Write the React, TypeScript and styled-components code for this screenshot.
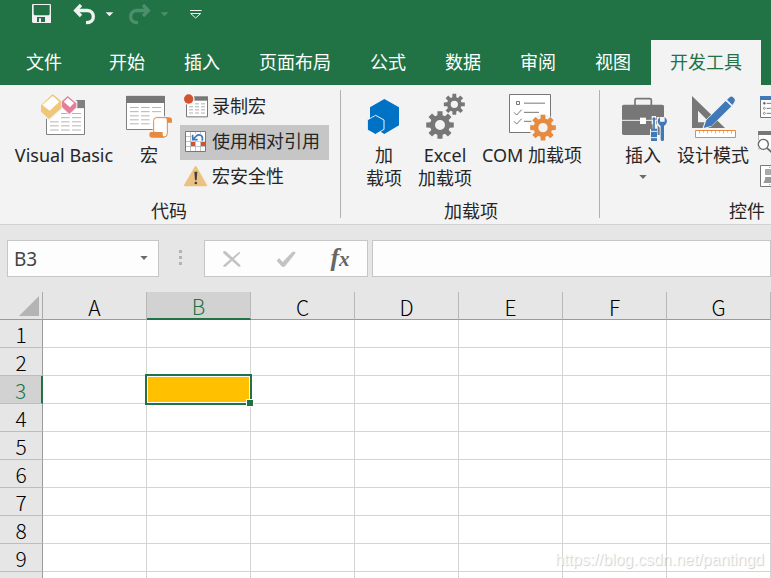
import React from "react";
import styled, { createGlobalStyle } from "styled-components";

const green = "#217346";
const ui = `"Noto Sans", "Noto Sans CJK SC", sans-serif`;

const GlobalStyle = createGlobalStyle`
  * { box-sizing: border-box; }
  body { margin: 0; overflow: hidden; background: #e6e6e6; }
  button { font: inherit; color: inherit; background: none; border: 0; padding: 0; margin: 0; }
  svg { display: block; flex: none; }
`;

const Window = styled.div`
  position: relative;
  display: flex;
  flex-direction: column;
  height: 100vh;
  overflow: hidden;
  font-family: ${ui};
  font-size: 18px;
  color: #262626;
`;

/* ---------- title and tabs ---------- */

const QuickAccess = styled.div`
  display: flex;
  align-items: flex-start;
  height: 40px;
  padding: 2px 0 0 31px;
  background: ${green};
`;

const QuickButton = styled.button<{ $gap?: number }>`
  margin-left: ${(p) => p.$gap ?? 0}px;
`;

const Tabs = styled.nav`
  display: flex;
  gap: 1px;
  height: 45px;
  padding-left: 7px;
  background: ${green};
`;

const Tab = styled.button<{ $active?: boolean; $wide?: boolean }>`
  padding: 0 ${(p) => (p.$wide ? 27 : 19)}px 2px 19px;
  line-height: 42px;
  white-space: nowrap;
  color: ${(p) => (p.$active ? green : "#fff")};
  background: ${(p) => (p.$active ? "#f3f3f3" : "transparent")};
`;

/* ---------- ribbon ---------- */

const Ribbon = styled.div`
  display: flex;
  height: 140px;
  overflow: hidden;
  background: #f3f3f3;
  border-bottom: 1px solid #d2d2d2;
`;

const Group = styled.section<{ $left: number; $right: number; $min?: number }>`
  display: flex;
  flex: none;
  flex-direction: column;
  justify-content: space-between;
  min-width: ${(p) => p.$min ?? 0}px;
  padding: 5px ${(p) => p.$right}px 1px ${(p) => p.$left}px;
`;

const GroupBody = styled.div`
  display: flex;
  align-items: flex-start;
`;

const GroupName = styled.div`
  line-height: 24px;
  text-align: center;
`;

const Divider = styled.div`
  flex: none;
  width: 1px;
  margin: 5px 0 6px;
  background: #b1b1b1;
`;

const BigButton = styled.button<{ $width: number }>`
  display: flex;
  flex-direction: column;
  align-items: center;
  gap: 3px;
  width: ${(p) => p.$width}px;
  padding-top: 3px;
  line-height: 23px;
  white-space: nowrap;
`;

const SmallColumn = styled.div<{ $gap: number }>`
  display: flex;
  flex-direction: column;
  margin-left: ${(p) => p.$gap}px;
`;

const SmallButton = styled.button<{ $on?: boolean }>`
  display: flex;
  align-items: center;
  gap: 4px;
  height: 35px;
  padding: 0 9px 0 4px;
  white-space: nowrap;
  background: ${(p) => (p.$on ? "#c6c6c6" : "transparent")};
`;

const SmallLabel = styled.span`
  padding-bottom: 4px;
  line-height: 24px;
`;

const IconOnly = styled.button`
  height: 35px;
`;

/* ---------- formula bar ---------- */

const FormulaRow = styled.div`
  display: flex;
  align-items: center;
  height: 67px;
  padding-left: 7px;
`;

const Field = styled.div<{ $width?: number }>`
  display: flex;
  align-items: center;
  flex: ${(p) => (p.$width ? "none" : "1")};
  width: ${(p) => (p.$width ? `${p.$width}px` : "auto")};
  height: 37px;
  background: #fdfdfd;
  border: 1px solid #c6c6c6;
`;

const NameInput = styled.input`
  flex: 1;
  min-width: 0;
  padding: 0 0 0 6px;
  border: 0;
  outline: 0;
  background: none;
  font: 19px ${ui};
  color: #444;
`;

const FormulaInput = styled(NameInput)`
  height: 100%;
`;

const DropButton = styled.button`
  padding: 0 10px;
`;

const Grip = styled.div`
  display: flex;
  flex-direction: column;
  gap: 3px;
  width: 45px;
  padding: 0 0 2px 20px;
`;

const GripDot = styled.span`
  width: 3px;
  height: 3px;
  background: #b3b3b3;
`;

const FormulaTools = styled(Field)`
  justify-content: space-between;
  margin-right: 4px;
  padding: 0 17px;
`;

/* ---------- sheet ---------- */

const Sheet = styled.div`
  flex: 1;
  min-height: 0;
  overflow: hidden;
`;

const Grid = styled.table`
  width: 100%;
  table-layout: fixed;
  border-spacing: 0;
  border-collapse: separate;
  font-family: "Noto Sans CJK SC", sans-serif;
  font-size: 21px;
  line-height: 26px;
  color: #000;
`;

const Corner = styled.th`
  width: 43px;
  height: 28px;
  padding: 0 3px 3px 0;
  border-right: 1px solid #ababab;
  border-bottom: 1px solid #9b9b9b;
  vertical-align: bottom;

  svg { margin-left: auto; }
`;

const ColumnHead = styled.th<{ $on: boolean }>`
  width: 104px;
  height: 28px;
  padding: ${(p) => (p.$on ? 2 : 3)}px 0 0;
  line-height: 24px;
  font-weight: 300;
  color: ${(p) => (p.$on ? green : "#000")};
  background: ${(p) => (p.$on ? "#d2d2d2" : "#e6e6e6")};
  border-right: 1px solid #b8b8b8;
  border-bottom: ${(p) => (p.$on ? `2px solid ${green}` : "1px solid #9b9b9b")};
`;

const HeadRest = styled.td`
  padding: 0;
  border-bottom: 1px solid #9b9b9b;
`;

const RowHead = styled.th<{ $on: boolean }>`
  height: 28px;
  padding: 1px 0 0;
  font-weight: 300;
  color: ${(p) => (p.$on ? green : "#000")};
  background: ${(p) => (p.$on ? "#d2d2d2" : "#e6e6e6")};
  border-right: ${(p) => (p.$on ? `2px solid ${green}` : "1px solid #9b9b9b")};
  border-bottom: 1px solid #bdbdbd;
`;

const Cell = styled.td`
  position: relative;
  height: 28px;
  padding: 0;
  background: #fff;
  border-right: 1px solid #d4d4d4;
  border-bottom: 1px solid #d4d4d4;
`;

const Selection = styled.div`
  position: absolute;
  z-index: 1;
  inset: -2px;
  border: 2px solid ${green};
  background: #ffc000;
  box-shadow: inset 0 0 0 1px #fff;
`;

const FillHandle = styled.span`
  position: absolute;
  right: -4px;
  bottom: -4px;
  width: 8px;
  height: 8px;
  background: ${green};
  border: 1px solid #fff;
`;

const Watermark = styled.div`
  position: absolute;
  right: 7px;
  bottom: 8px;
  z-index: 2;
  font: 16px/20px "Liberation Sans", sans-serif;
  color: rgba(255, 255, 255, 0.8);
  text-shadow: 1px 1px 1px rgba(0, 0, 0, 0.2);
  pointer-events: none;
`;

/* ---------- icons: three drawing units per pixel ---------- */

type IconProps = { x: number; y: number; w?: number; h?: number; children: React.ReactNode };

const Icon = ({ x, y, w = 48, h = 48, children }: IconProps) => (
  <svg width={w} height={h} viewBox={`${x} ${y} ${w * 3} ${h * 3}`} overflow="visible" aria-hidden="true">
    {children}
  </svg>
);

const gearPath = (cx: number, cy: number, outer: number, inner: number, hole: number) => {
  const point = (r: number, a: number) =>
    `${(cx + r * Math.cos(a)).toFixed(1)} ${(cy + r * Math.sin(a)).toFixed(1)}`;
  const step = Math.PI / 4;
  const points: string[] = [];
  for (let i = 0; i < 8; i++) {
    const a = i * step;
    points.push(point(inner, a - 0.27), point(outer, a - 0.18), point(outer, a + 0.18), point(inner, a + 0.27));
  }
  return `M${points.join("L")}ZM${cx - hole} ${cy}a${hole} ${hole} 0 1 0 ${hole * 2} 0a${hole} ${hole} 0 1 0 ${-hole * 2} 0Z`;
};

const SaveIcon = () => (
  <Icon x={93} y={6} w={21} h={24}>
    <path fillRule="evenodd" fill="#f1f1f1" d="M98 12H151L153 14V69H99L96 66V14ZM101 15V43L104 46H146L149 43V15ZM111 51V66H117V55H123V66H135V51Z" />
  </Icon>
);

const UndoShape = () => (
  <>
    <path d="M243 15L227 31.500L243 48" fill="none" stroke="currentColor" strokeWidth="10" />
    <path d="M228 31.500H262C275 31.500 280 41 280 50C280 60 273 68 258 68" fill="none" stroke="currentColor" strokeWidth="10" />
  </>
);

const UndoIcon = () => (
  <Icon x={219} y={6} w={23} h={24}>
    <g color="#f1f1f1"><UndoShape /></g>
  </Icon>
);

const RedoIcon = () => (
  <Icon x={384} y={6} w={23} h={24}>
    <g color="#4d8f6c" transform="translate(672 0) scale(-1 1)"><UndoShape /></g>
  </Icon>
);

const CaretIcon = ({ color }: { color: string }) => (
  <Icon x={0} y={0} w={9} h={24}>
    <path d="M2 31H25L13.500 43Z" fill={color} />
  </Icon>
);

const CustomizeIcon = () => (
  <Icon x={567} y={6} w={13} h={24}>
    <path d="M570 31.500H605M572 40.500L587 54L602 40.500Z" fill="none" stroke="#f1f1f1" strokeWidth="3" />
  </Icon>
);

const DownTriangle = ({ gap = 0 }: { gap?: number }) => (
  <Icon x={0} y={-gap * 3} w={8} h={5 + gap}>
    <path d="M1 0H23L12 12Z" fill="#6a6a6a" />
  </Icon>
);

const VisualBasicIcon = () => (
  <Icon x={120} y={24}>
    <path d="M139.500 68H253.500V148.500H139.500Z" fill="#fff" stroke="#808080" strokeWidth="3" />
    <path d="M190 45H255V69H190Z" fill="#808080" />
    <path d="M183 85.500H209M216 85.500H243M183 98H209M216 98H243M150 110.500H176M183 110.500H209M216 110.500H243M150 122.500H176M183 122.500H209M216 122.500H243M150 135H176M183 135H209M216 135H243" stroke="#b5b5b5" strokeWidth="3" />
    <path d="M160 23L188 49V73L148 108L118 84V60Z" fill="#f3f3f3" />
    <path d="M204 30L232 49V68L208 91L184 68V45Z" fill="#f3f3f3" />
    <path d="M158 27L184 49V70L147 102L123 80V61Z" fill="#efc77b" />
    <path d="M158 33L178 50L149 77L127 60Z" fill="#fff" />
    <path d="M203 33L229 55V67L208 87L186 66V49Z" fill="#e37f99" />
    <path d="M203 38L222 54L210 67L191 50Z" fill="#fff" />
  </Icon>
);

const MacroIcon = () => (
  <Icon x={375} y={24}>
    <path d="M379.500 34H493.500V133.500H379.500Z" fill="#fff" stroke="#808080" strokeWidth="3" />
    <path d="M378 33H495V54H378Z" fill="#777" />
    <path d="M390 67.500H416M423 67.500H449M456 67.500H483M390 80H416M423 80H449M456 80H483M390 92.500H416M423 92.500H449M390 104.500H416M423 104.500H449M390 116.500H416M423 116.500H449" stroke="#b5b5b5" strokeWidth="3" />
    <path d="M467 94H512L520 104V116H509V150L502 161H445V137H458V104Z" fill="#f3f3f3" />
    <path d="M461 142V106Q461 98 469 98H502V146Q502 156 492 156H472V142Z" fill="#fff" stroke="#e68a3f" strokeWidth="3" />
    <path d="M492 97H507Q516 97 516 106V113H501V106Q501 99 492 97Z" fill="#e68a3f" />
    <path d="M451 141H488V149Q488 154 494 158H456Q448 158 448 149Q448 144 451 141Z" fill="#e68a3f" />
  </Icon>
);

const RecordIcon = () => (
  <Icon x={42} y={32} w={24} h={24}>
    <path d="M49.500 36H112.500V94.500H49.500Z" fill="#fff" stroke="#777" strokeWidth="3" />
    <path d="M72 33H114V46H72Z" fill="#777" />
    <path d="M75 55.500H87M93 55.500H105M57 64.500H69M75 64.500H87M93 64.500H105M57 73.500H69M75 73.500H87M93 73.500H105M57 83H69M75 83H87M93 83H105" stroke="#b0b0b0" strokeWidth="3" />
    <circle cx="56" cy="41" r="18" fill="#f3f3f3" />
    <circle cx="56" cy="41" r="14" fill="#d35230" />
  </Icon>
);

const RelativeIcon = () => (
  <Icon x={42} y={135} w={24} h={24}>
    <path d="M46.500 136.500H106.500V196.500H46.500Z" fill="#fff" stroke="#777" strokeWidth="3" />
    <path d="M61.500 138V195M76.500 138V195M91.500 138V195M48 151.500H105M48 166.500H105M48 181.500H105" stroke="#a6a6a6" strokeWidth="2" />
    <path d="M64 143H98L105 150V166H64Z" fill="#fff" />
    <path d="M63 168H75V180H63ZM93 168H106V180H93Z" fill="#d35230" />
    <path d="M68 146V161H83M69 160L79 150Q86 144 94 149Q100 155 96 164" fill="none" stroke="#3f79b8" strokeWidth="5" />
  </Icon>
);

const SecurityIcon = () => (
  <Icon x={42} y={240} w={24} h={24}>
    <path d="M77 243L108 298H45Z" fill="#ecc282" stroke="#ecc282" strokeWidth="6" strokeLinejoin="round" />
    <path d="M73 257H82L80 283H75Z" fill="#404040" />
    <circle cx="77.500" cy="291" r="4" fill="#404040" />
  </Icon>
);

const AddInIcon = () => (
  <Icon x={60} y={24}>
    <path d="M133 42L177 67V121L133 147L90 121V67Z" fill="#0072c6" />
    <path d="M107 91L132 105V133L107 148L82 133V105Z" fill="#0072c6" stroke="#f3f3f3" strokeWidth="3" />
    <path d="M84 106L107 93V147L84 134Z" fill="#0072c6" />
  </Icon>
);

const ExcelAddInIcon = () => (
  <Icon x={243} y={24}>
    <path fillRule="evenodd" fill="#777" d={gearPath(343, 58, 32, 22, 11)} />
    <path fillRule="evenodd" fill="#777" d={gearPath(300, 120, 42, 30, 15)} />
  </Icon>
);

const ComAddInIcon = () => (
  <Icon x={504} y={24}>
    <path d="M508.500 28.500H631.500V142.500H508.500Z" fill="#fff" stroke="#777" strokeWidth="3" />
    <path d="M529.500 49.500H538.500V58.500H529.500ZM552 54.500H615M552 82H597M552 109H580M522 82L530 90L545 74M522 109L530 117L545 101" fill="none" stroke="#777" strokeWidth="3" />
    <circle cx="609" cy="128" r="40" fill="#f3f3f3" />
    <path fillRule="evenodd" fill="#e68a3f" d={gearPath(609, 128, 39, 28, 14)} />
  </Icon>
);

const ToolboxIcon = () => (
  <Icon x={87} y={24}>
    <path d="M135 60V45Q135 41 139 41H179Q184 41 184 45V60" fill="none" stroke="#777" strokeWidth="5" />
    <rect x="96" y="59" width="126" height="91" rx="5" fill="#777" />
    <path d="M96 106H222" stroke="#f3f3f3" strokeWidth="3" />
    <path d="M150 98H168V117H150Z" fill="#fff" />
    <path d="M185 93H198V118H203V170H180V132H188V118H185Z" fill="#f3f3f3" />
    <path d="M200 96H234V118L225 128V170H209V128L200 118Z" fill="#f3f3f3" />
    <path d="M192 96L198 102L194.500 106V131H201V168H183V131H189.500V106L186 102Z" fill="#3f79b8" />
    <path d="M183 139H201M183 158H201" stroke="#f3f3f3" strokeWidth="3" />
    <path d="M210 96V110H224V96Q231 101 231 109Q230 119 222 123V164Q222 168 217 168Q212 168 212 164V123Q204 119 203 109Q203 101 210 96Z" fill="#3f79b8" />
  </Icon>
);

const DesignIcon = () => (
  <Icon x={297} y={24}>
    <path fillRule="evenodd" d="M306 33L405 129H306ZM324 77V112H358Z" fill="#777" />
    <path d="M335 137L345 107L418 34L438 51L365 124Z" fill="#f3f3f3" />
    <path d="M341 129L349 106L407 48L424 64L365 122ZM411 44L420 36Q425 33 429 37L434 42Q436 47 433 51L427 60Z" fill="#3f79b8" />
    <path d="M316.500 136.500H436.500V157.500H316.500Z" fill="#fff" stroke="#e68a3f" strokeWidth="3" />
    <path d="M328.500 138V146M340.500 138V143M352.500 138V146M364.500 138V143M376.500 138V146M388.500 138V143M400.500 138V146M412.500 138V143M424.500 138V146" stroke="#e68a3f" strokeWidth="2" />
  </Icon>
);

const PropertiesIcon = () => (
  <Icon x={504} y={30} w={24} h={24}>
    <path d="M511.500 32H575V94.500H511.500Z" fill="#fff" stroke="#777" strokeWidth="3" />
    <path d="M510 30H576V42H510Z" fill="#3f79b8" />
    <path d="M530 52H543M530 67H543M530 82H543M550 52H566M550 67H566M550 82H566" stroke="#777" strokeWidth="3" />
    <g fill="#fff" stroke="#666" strokeWidth="2">
      <circle cx="523" cy="52" r="3" fill="#666" />
      <circle cx="523" cy="67" r="3" />
      <circle cx="523" cy="82" r="3" />
    </g>
  </Icon>
);

const ViewCodeIcon = () => (
  <Icon x={504} y={138} w={24} h={24}>
    <path d="M505.500 140H570V192H505.500Z" fill="#fff" stroke="#999" strokeWidth="2" />
    <path d="M504 138H572V150H504Z" fill="#777" />
    <path d="M533 192L548 205" stroke="#f3f3f3" strokeWidth="12" />
    <circle cx="520" cy="178" r="19" fill="#f3f3f3" />
    <circle cx="520" cy="178" r="15" fill="#fff" stroke="#666" strokeWidth="4" />
    <path d="M531 189L547 204" stroke="#666" strokeWidth="5" />
  </Icon>
);

const DialogIcon = () => (
  <Icon x={504} y={243} w={24} h={24}>
    <path d="M511.500 241.500H575V304.500H511.500Z" fill="#fff" stroke="#777" strokeWidth="3" />
    <path d="M525 252H568V270H525ZM525 276H568V292H525Z" fill="#aaa" />
    <path d="M520 294L529 276H568V294Z" fill="#999" />
    <path d="M537 247H541M537 299H541" stroke="#777" strokeWidth="2" />
  </Icon>
);

const CancelIcon = () => (
  <Icon x={666} y={70} w={20} h={20}>
    <path d="M669 78Q674 73 680 79L721 118V123H716L670 83ZM718 78L721 82L677 123H670V119Z" fill="#c3c3c3" />
  </Icon>
);

const EnterIcon = () => (
  <Icon x={829} y={70} w={21} h={20}>
    <path d="M831 105L838 97L849 109L879 78H887V83L856 122Q850 127 845 121Z" fill="#c3c3c3" />
  </Icon>
);

const Fx = styled.span`
  display: block;
  width: 20px;
  font: italic bold 26px/32px "Liberation Serif", serif;
  color: #666;
  white-space: nowrap;

  small { font-size: 21px; }
`;

const tabs = ["开始", "插入", "页面布局", "公式", "数据", "审阅", "视图"];
const columns = ["A", "B", "C", "D", "E", "F", "G"];
const rows = [1, 2, 3, 4, 5, 6, 7, 8, 9, 10];
const selected = { column: "B", row: 3 };

export default function App() {
  return (
    <Window>
      <GlobalStyle />
      <QuickAccess>
        <QuickButton aria-label="保存"><SaveIcon /></QuickButton>
        <QuickButton $gap={21} aria-label="撤消"><UndoIcon /></QuickButton>
        <QuickButton $gap={9} aria-label="撤消列表"><CaretIcon color="#f1f1f1" /></QuickButton>
        <QuickButton $gap={14} aria-label="恢复"><RedoIcon /></QuickButton>
        <QuickButton $gap={9} aria-label="恢复列表"><CaretIcon color="#4d8f6c" /></QuickButton>
        <QuickButton $gap={20} aria-label="自定义快速访问工具栏"><CustomizeIcon /></QuickButton>
      </QuickAccess>
      <Tabs>
        <Tab $wide>文件</Tab>
        {tabs.map((name) => <Tab key={name}>{name}</Tab>)}
        <Tab $active>开发工具</Tab>
      </Tabs>

      <Ribbon>
        <Group $left={9} $right={11}>
          <GroupBody>
            <BigButton $width={110}><VisualBasicIcon />Visual Basic</BigButton>
            <BigButton $width={60}><MacroIcon />宏</BigButton>
            <SmallColumn $gap={1}>
              <SmallButton><RecordIcon /><SmallLabel>录制宏</SmallLabel></SmallButton>
              <SmallButton $on aria-pressed="true"><RelativeIcon /><SmallLabel>使用相对引用</SmallLabel></SmallButton>
              <SmallButton><SecurityIcon /><SmallLabel>宏安全性</SmallLabel></SmallButton>
            </SmallColumn>
          </GroupBody>
          <GroupName>代码</GroupName>
        </Group>
        <Divider />
        <Group $left={15} $right={13}>
          <GroupBody>
            <BigButton $width={56}><AddInIcon /><span>加<br />载项</span></BigButton>
            <BigButton $width={66}><ExcelAddInIcon /><span>Excel<br />加载项</span></BigButton>
            <BigButton $width={108}><ComAddInIcon />COM 加载项</BigButton>
          </GroupBody>
          <GroupName>加载项</GroupName>
        </Group>
        <Divider />
        <Group $left={12} $right={12} $min={294}>
          <GroupBody>
            <BigButton $width={62}><ToolboxIcon />插入<DownTriangle gap={5} /></BigButton>
            <BigButton $width={78}><DesignIcon />设计模式</BigButton>
            <SmallColumn $gap={6}>
              <IconOnly aria-label="属性"><PropertiesIcon /></IconOnly>
              <IconOnly aria-label="查看代码"><ViewCodeIcon /></IconOnly>
              <IconOnly aria-label="运行对话框"><DialogIcon /></IconOnly>
            </SmallColumn>
          </GroupBody>
          <GroupName>控件</GroupName>
        </Group>
      </Ribbon>

      <FormulaRow>
        <Field $width={152}>
          <NameInput aria-label="名称框" defaultValue="B3" />
          <DropButton aria-label="名称列表"><DownTriangle /></DropButton>
        </Field>
        <Grip><GripDot /><GripDot /><GripDot /></Grip>
        <FormulaTools $width={164}>
          <button aria-label="取消"><CancelIcon /></button>
          <button aria-label="输入"><EnterIcon /></button>
          <button aria-label="插入函数"><Fx>f<small>x</small></Fx></button>
        </FormulaTools>
        <Field><FormulaInput aria-label="编辑栏" /></Field>
      </FormulaRow>

      <Sheet>
        <Grid>
          <thead>
            <tr>
              <Corner aria-label="全选">
                <svg width="20" height="20" viewBox="0 0 20 20"><path d="M20 0V20H0Z" fill="#b4b4b4" /></svg>
              </Corner>
              {columns.map((c) => <ColumnHead key={c} scope="col" $on={c === selected.column}>{c}</ColumnHead>)}
              <HeadRest />
            </tr>
          </thead>
          <tbody>
            {rows.map((r) => (
              <tr key={r}>
                <RowHead scope="row" $on={r === selected.row}>{r}</RowHead>
                {columns.map((c) => (
                  <Cell key={c}>
                    {r === selected.row && c === selected.column && <Selection><FillHandle /></Selection>}
                  </Cell>
                ))}
                <Cell />
              </tr>
            ))}
          </tbody>
        </Grid>
      </Sheet>
      <Watermark>https://blog.csdn.net/pantingd</Watermark>
    </Window>
  );
}
